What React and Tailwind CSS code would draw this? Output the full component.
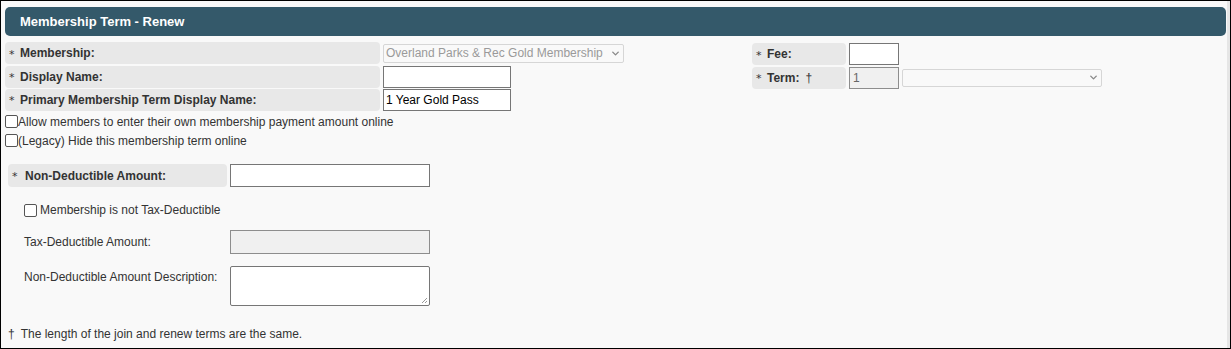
import { ChevronDown } from 'lucide-react'

function LabelCell({ children, className = '' }) {
  return (
    <div className={`flex items-center h-[22px] bg-[#e8e8e8] rounded-[4px] text-[12px] font-bold text-[#333] ${className}`}>
      <span className="w-[15px] pl-[4px] text-[11px] font-normal translate-y-[2px] font-['DejaVu_Sans',sans-serif]">*</span>
      {children}
    </div>
  )
}

function Select({ value, className = '' }) {
  return (
    <div className={`flex items-center justify-between border border-[#d6d6d6] rounded-[2px] bg-[#f9f9f9] text-[12px] text-[#9a9a9a] px-[2px] ${className}`}>
      <span>{value}</span>
      <ChevronDown className="w-[11px] h-[11px] text-[#888]" strokeWidth={3} />
    </div>
  )
}

export default function App() {
  return (
    <div className="w-[1231px] h-[349px] border border-black bg-[#f9f9f9] font-['Liberation_Sans',Arial,sans-serif] text-[12px] text-[#333] overflow-hidden">
      <div className="h-full border-r-[3px] border-[#e6e6e6] pl-[4px] pr-[1px] pt-[6px]">
        <div className="h-[29px] bg-[#34596a] rounded-[5px] flex items-center pl-[15px] text-white font-bold text-[13px]">
          Membership Term - Renew
        </div>

        <div className="flex mt-[6px]">
          <div className="w-[746px]">
            <div className="flex items-center h-[22px]">
              <LabelCell className="w-[375px]">Membership:</LabelCell>
              <Select value="Overland Parks & Rec Gold Membership" className="ml-[3px] w-[241px] h-[19px]" />
            </div>
            <div className="flex items-center h-[23px] mt-[1px]">
              <LabelCell className="w-[375px]">Display Name:</LabelCell>
              <div className="ml-[3px] w-[128px] h-[22px] border border-[#767676] bg-white" />
            </div>
            <div className="flex items-center h-[23px]">
              <LabelCell className="w-[375px]">Primary Membership Term Display Name:</LabelCell>
              <div className="ml-[3px] w-[128px] h-[22px] border border-[#767676] bg-white flex items-center pl-[2px] text-[12px] text-black">1 Year Gold Pass</div>
            </div>
          </div>
          <div className="ml-[1px] pt-[1px]">
            <div className="flex items-center h-[22px]">
              <LabelCell className="w-[94px]">Fee:</LabelCell>
              <div className="ml-[3px] w-[50px] h-[22px] border border-[#767676] bg-white" />
            </div>
            <div className="flex items-center h-[23px] mt-[1px]">
              <LabelCell className="w-[94px]">Term:<span className="ml-[6px] font-normal text-[#333]">&#8224;</span></LabelCell>
              <div className="ml-[3px] w-[50px] h-[22px] border border-[#8d8d8d] bg-[#f0f0f0] flex items-center pl-[3px] text-[#666]">1</div>
              <Select value="" className="ml-[3px] w-[200px] h-[18px]" />
            </div>
          </div>
        </div>

        <label className="flex items-center h-[19px] mt-[1px] text-[12px] text-[#333]">
          <span className="w-[13px] h-[13px] border border-[#555] rounded-[2px] bg-white" />
          Allow members to enter their own membership payment amount online
        </label>
        <label className="flex items-center h-[19px] text-[12px] text-[#333]">
          <span className="w-[13px] h-[13px] border border-[#555] rounded-[2px] bg-white" />
          (Legacy) Hide this membership term online
        </label>

        <div className="flex items-center mt-[14px] ml-[3px]">
          <LabelCell className="w-[219px] h-[23px]"><span className="ml-[2px]">Non-Deductible Amount:</span></LabelCell>
          <div className="ml-[3px] w-[200px] h-[23px] border border-[#767676] bg-white" />
        </div>

        <label className="flex items-center mt-[14px] ml-[19px] text-[12px]">
          <span className="w-[13px] h-[13px] border border-[#555] rounded-[2px] bg-white mr-[3px]" />
          Membership is not Tax-Deductible
        </label>

        <div className="flex items-center mt-[11px] ml-[19px]">
          <div className="w-[206px]">Tax-Deductible Amount:</div>
          <div className="w-[200px] h-[24px] border border-[#8d8d8d] bg-[#f0f0f0]" />
        </div>

        <div className="flex items-start mt-[12px] ml-[19px]">
          <div className="w-[206px] pt-[2px]">Non-Deductible Amount Description:</div>
          <div className="relative w-[200px] h-[40px] border border-[#767676] bg-white rounded-[2px]">
            <svg className="absolute right-[1px] bottom-[1px]" width="7" height="7" viewBox="0 0 7 7">
              <path d="M6 1 L1 6 M6 4 L4 6" stroke="#999" strokeWidth="1" />
            </svg>
          </div>
        </div>

        <div className="mt-[19px] ml-[3px] text-[12px]">
          <span className="mr-[6px]">&#8224;</span>The length of the join and renew terms are the same.
        </div>
      </div>
    </div>
  )
}
